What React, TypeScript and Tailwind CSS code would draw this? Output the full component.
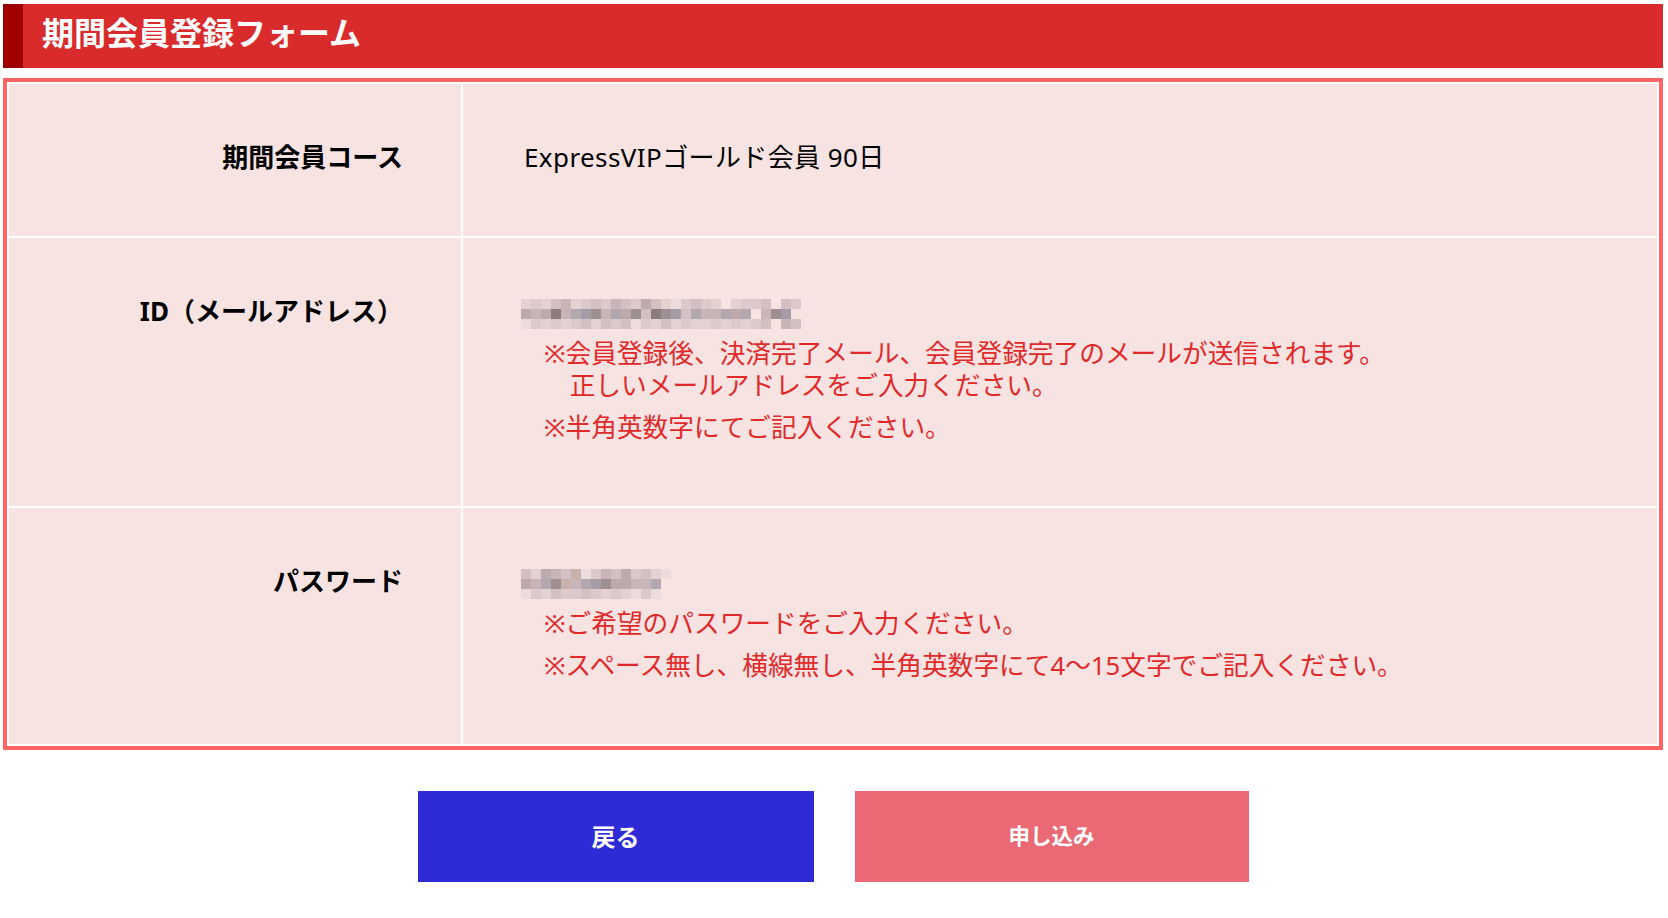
import React from 'react'

const font = 'font-["Noto_Sans","Noto_Sans_CJK_JP",sans-serif]'

// blurred placeholder palette, one class per letter
const shade: Record<string, string> = {
  a: 'bg-[#eddcdd]',
  b: 'bg-[#e4d2d3]',
  c: 'bg-[#dcc9cb]',
  d: 'bg-[#d3c0c2]',
  e: 'bg-[#c8b5b7]',
  f: 'bg-[#bcaaac]',
  g: 'bg-[#b3a8b0]',
  h: 'bg-[#9e9092]',
  i: 'bg-[#8c7c7c]',
  j: 'bg-[#a59ca8]',
  k: 'bg-[#c9b2ae]',
}

function Blur({ rows }: { rows: string[] }) {
  return (
    <div className="flex h-[32px] items-start">
      <div className="mt-[4px] flex flex-col">
        {rows.map((row, i) => (
          <div key={i} className="flex h-[10px]">
            {row.split('').map((ch, j) => (
              <div key={j} className={`h-[10px] w-[10px] ${shade[ch] ?? ''}`} />
            ))}
          </div>
        ))}
      </div>
    </div>
  )
}

function Note({ first, children }: { first?: boolean; children: React.ReactNode }) {
  return (
    <p
      className={`${first ? 'mt-[11px]' : 'mt-[10px]'} ml-[23px] pl-[1em] indent-[-1em] text-[25.7px] leading-[32px] text-[#e02a2a]`}
    >
      {children}
    </p>
  )
}

function Row({ label, short, children }: { label: string; short?: boolean; children: React.ReactNode }) {
  const pad = short ? 'pt-[57px] pb-[63px]' : 'pt-[57px] pb-[62px]'
  return (
    <>
      <div className={`bg-[#f8e3e3] ${pad} pr-[58px] text-right text-[26px] leading-[32px] font-bold text-black`}>
        <div className="h-[32px]">{label}</div>
      </div>
      <div className={`bg-[#f8e3e3] ${pad} pl-[58px] text-[26px] leading-[32px] text-black`}>{children}</div>
    </>
  )
}

export default function App() {
  return (
    <div className={`${font} min-h-[918px] bg-white pt-[4px] pl-[3px]`}>
      <div className="w-[1660px]">
        <h1 className="flex h-[64px] items-center border-l-[20px] border-[#a00000] bg-[#d92b2b] pb-[6px] pl-[19px] text-[32px] font-bold text-white">
          期間会員登録フォーム
        </h1>

        <div className="mt-[10px] border-4 border-[#ff6464] bg-white p-[2px]">
          <div className="grid grid-cols-[452px_1fr] gap-[2px]">
            <Row label="期間会員コース" short>
              <div className="h-[32px] pl-[3px] tracking-[0.4px]">ExpressVIPゴールド会員 90日</div>
            </Row>

            <Row label="ID（メールアドレス）">
              <Blur
                rows={[
                  'bcbdebcdcedcfdbacdcb.bccd.dc',
                  'fefiegjhegfhdihjdgeegfg.ehj',
                  'acbcbcdbdcdacbdbcbbcbcbcd.ed',
                ]}
              />
              <Note first>
                ※会員登録後、決済完了メール、会員登録完了のメールが送信されます。
                <br />
                正しいメールアドレスをご入力ください。
              </Note>
              <Note>※半角英数字にてご記入ください。</Note>
            </Row>

            <Row label="パスワード">
              <Blur rows={['dbfedkacedfcdba', 'feghkegjhffeeg', 'acbdccdcbcbaca']} />
              <Note first>※ご希望のパスワードをご入力ください。</Note>
              <Note>※スペース無し、横線無し、半角英数字にて4～15文字でご記入ください。</Note>
            </Row>
          </div>
        </div>

        <div className="mt-[41px] flex justify-center gap-[41px]">
          <button className="h-[91px] w-[396px] bg-[#2e2bd6] text-[24px] font-bold text-white">戻る</button>
          <button className="h-[91px] w-[394px] bg-[#ea6974] text-[21.5px] font-bold text-white">申し込み</button>
        </div>
      </div>
    </div>
  )
}
